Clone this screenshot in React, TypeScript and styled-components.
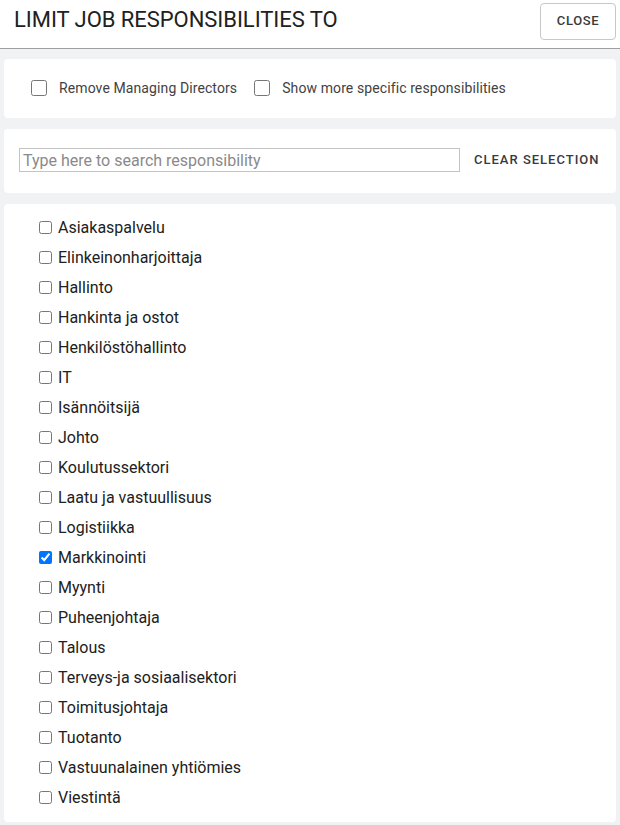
import React from 'react';
import styled, { createGlobalStyle } from 'styled-components';

const responsibilities = [
    'Asiakaspalvelu',
    'Elinkeinonharjoittaja',
    'Hallinto',
    'Hankinta ja ostot',
    'Henkilöstöhallinto',
    'IT',
    'Isännöitsijä',
    'Johto',
    'Koulutussektori',
    'Laatu ja vastuullisuus',
    'Logistiikka',
    'Markkinointi',
    'Myynti',
    'Puheenjohtaja',
    'Talous',
    'Terveys-ja sosiaalisektori',
    'Toimitusjohtaja',
    'Tuotanto',
    'Vastuunalainen yhtiömies',
    'Viestintä',
];

const App = () => {
    return (
        <>
            <GlobalStyle />
            <Wrapper>
                <Header>
                    <Title>LIMIT JOB RESPONSIBILITIES TO</Title>
                    <CloseButton>CLOSE</CloseButton>
                </Header>
                <Body>
                    <Panel>
                        <OptionRow>
                            <Option>
                                <BigCheck type="checkbox" />
                                Remove Managing Directors
                            </Option>
                            <Option>
                                <BigCheck type="checkbox" />
                                Show more specific responsibilities
                            </Option>
                        </OptionRow>
                    </Panel>
                    <Panel>
                        <SearchRow>
                            <SearchInput placeholder="Type here to search responsibility" />
                            <ClearButton>CLEAR SELECTION</ClearButton>
                        </SearchRow>
                    </Panel>
                    <Panel>
                        <List>
                            {responsibilities.map((r) => (
                                <Item key={r}>
                                    <SmallCheck type="checkbox" defaultChecked={r === 'Markkinointi'} />
                                    {r}
                                </Item>
                            ))}
                        </List>
                    </Panel>
                </Body>
            </Wrapper>
        </>
    );
};

export default App;

const GlobalStyle = createGlobalStyle`
    html, body {
        margin: 0;
        padding: 0;
        background: #f1f2f4;
        font-family: Roboto, "Liberation Sans", sans-serif;
        color: #212121;
    }
    * {
        box-sizing: border-box;
    }
`;

const Wrapper = styled.div`
    width: 620px;
    min-height: 825px;
    background: #f1f2f4;
`;

const Header = styled.div`
    height: 49px;
    background: #fff;
    border-bottom: 1px solid #9e9e9e;
    display: flex;
    align-items: flex-start;
    justify-content: space-between;
    padding: 3px 4px 0 14px;
`;

const Title = styled.h1`
    margin: 4px 0 0;
    font-size: 22px;
    font-weight: 400;
    color: #212121;
    letter-spacing: -0.05px;
`;

const CloseButton = styled.button`
    width: 76px;
    height: 37px;
    padding: 0 0 2px;
    background: #fff;
    border: 1px solid #c8c8c8;
    border-radius: 4px;
    font-family: Roboto, "Liberation Sans", sans-serif;
    font-size: 13px;
    font-weight: 500;
    letter-spacing: 0.6px;
    color: #3a3a3a;
    cursor: pointer;
`;

const Body = styled.div`
    padding: 10px 4px 3px;
    display: flex;
    flex-direction: column;
    gap: 11px;
`;

const Panel = styled.div`
    background: #fff;
    border-radius: 4px;
`;

const OptionRow = styled.div`
    height: 59px;
    display: flex;
    align-items: center;
    gap: 17px;
    padding: 0 0 2px 27px;
`;

const Option = styled.label`
    display: flex;
    align-items: center;
    gap: 12px;
    font-size: 14px;
    letter-spacing: 0.1px;
    color: #424242;
`;

const BigCheck = styled.input`
    width: 16px;
    height: 16px;
    margin: 0;
    accent-color: #0075ff;
`;

const SearchRow = styled.div`
    height: 64px;
    display: flex;
    align-items: center;
    padding: 0 15px 2px;
    gap: 14px;
`;

const SearchInput = styled.input`
    width: 441px;
    height: 24px;
    border: 1px solid #c4c4c4;
    padding: 0 3px;
    font-family: Roboto, "Liberation Sans", sans-serif;
    font-size: 16px;
    color: #333;
    outline: none;

    &::placeholder {
        color: #8a8a8a;
    }
`;

const ClearButton = styled.button`
    background: none;
    border: none;
    padding: 0 0 2px;
    font-family: Roboto, "Liberation Sans", sans-serif;
    font-size: 13px;
    font-weight: 500;
    letter-spacing: 1px;
    color: #3a3a3a;
    cursor: pointer;
`;

const List = styled.div`
    display: flex;
    flex-direction: column;
    padding: 8px 0 10px 35px;
`;

const Item = styled.label`
    height: 30px;
    display: flex;
    align-items: center;
    gap: 6px;
    font-size: 16px;
    color: #212121;
`;

const SmallCheck = styled.input`
    width: 13px;
    height: 13px;
    margin: 0;
`;
